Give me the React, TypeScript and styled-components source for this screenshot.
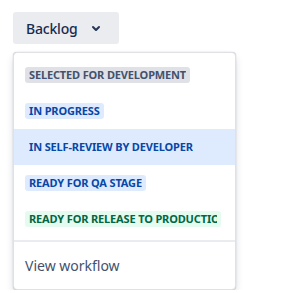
import styled, { createGlobalStyle } from "styled-components";

const GlobalStyle = createGlobalStyle`
  body {
    margin: 0;
    background: #ffffff;
    font-family: "Noto Sans", "Liberation Sans", sans-serif;
    color: #172b4d;
  }
`;

type Tone = "default" | "inprogress" | "success";

const statuses: { name: string; tone: Tone; selected?: boolean }[] = [
  { name: "Selected for Development", tone: "default" },
  { name: "In Progress", tone: "inprogress" },
  { name: "In Self-Review by Developer", tone: "inprogress", selected: true },
  { name: "Ready for QA Stage", tone: "inprogress" },
  { name: "Ready for Release to Production", tone: "success" },
];

const tones = {
  default: { bg: "#dfe1e6", fg: "#42526e" },
  inprogress: { bg: "#deebff", fg: "#0747a6" },
  success: { bg: "#e3fcef", fg: "#006644" },
};

const App = () => {
  return (
    <Page>
      <GlobalStyle />
      <TriggerButton>
        <span>Backlog</span>
        <svg width="24" height="24" viewBox="0 0 24 24">
          <path
            d="M8.292 10.293a1.009 1.009 0 0 0 0 1.419l2.939 2.965c.218.215.5.322.779.322s.556-.107.769-.322l2.93-2.955a1.01 1.01 0 0 0 0-1.419.987.987 0 0 0-1.406 0l-2.298 2.317-2.307-2.327a.99.99 0 0 0-1.406 0z"
            fill="currentColor"
          />
        </svg>
      </TriggerButton>
      <Menu>
        <List>
          {statuses.map((s) => (
            <Item key={s.name} $selected={s.selected}>
              <Lozenge $tone={s.tone}>
                <LozengeText>{s.name}</LozengeText>
              </Lozenge>
            </Item>
          ))}
        </List>
        <Footer>View workflow</Footer>
      </Menu>
    </Page>
  );
};

const Page = styled.div`
  padding: 12px 0 0 13px;
  display: flex;
  flex-direction: column;
  align-items: flex-start;
  gap: 8px;
`;

const TriggerButton = styled.button`
  display: flex;
  align-items: center;
  gap: 6px;
  width: 106px;
  height: 32px;
  padding: 0 11px 0 13px;
  border: none;
  border-radius: 3px;
  background: #ebecf0;
  color: #172b4d;
  font-family: inherit;
  font-size: 14px;
  font-weight: 500;
  letter-spacing: -0.2px;
  box-sizing: border-box;

  span {
    flex: 1;
    text-align: left;
  }

  svg {
    color: #253858;
  }
`;

const Menu = styled.div`
  width: 223px;
  background: #ffffff;
  border-radius: 4px;
  box-shadow: 0 4px 8px -2px rgba(9, 30, 66, 0.25),
    0 0 1px rgba(9, 30, 66, 0.31);
  border: 1px solid #dfe1e6;
  box-sizing: border-box;
`;

const List = styled.ul`
  list-style: none;
  margin: 0;
  padding: 4px 0 3px;
`;

const Item = styled.li<{ $selected?: boolean }>`
  display: flex;
  align-items: center;
  height: 36px;
  padding: 0 12px 0 11px;
  background: ${(p) => (p.$selected ? "#deebff" : "transparent")};
`;

const Lozenge = styled.span<{ $tone: Tone }>`
  display: inline-flex;
  padding: 0 4px;
  border-radius: 3px;
  background: ${(p) => tones[p.$tone].bg};
  color: ${(p) => tones[p.$tone].fg};
  font-size: 11px;
  font-weight: 700;
  line-height: 16px;
  letter-spacing: -0.15px;
  text-transform: uppercase;
`;

const LozengeText = styled.span`
  max-width: 188px;
  white-space: nowrap;
  overflow: hidden;
`;

const Footer = styled.div`
  border-top: 2px solid #ebecf0;
  padding: 0 11px;
  height: 47px;
  display: flex;
  align-items: center;
  color: #42526e;
  font-size: 14px;
`;

export default App;
